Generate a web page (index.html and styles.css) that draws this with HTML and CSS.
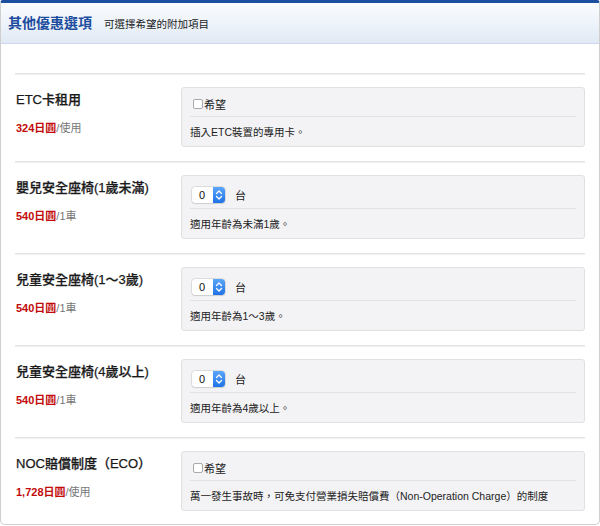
FILE: index.html
```html
<!DOCTYPE html>
<html lang="zh-Hant">
<head>
<meta charset="utf-8">
<title>其他優惠選項</title>
<link rel="stylesheet" href="styles.css">
</head>
<body>
<div class="panel">
  <div class="panel-head">
    <h2 class="panel-title">其他優惠選項</h2>
    <span class="panel-sub">可選擇希望的附加項目</span>
  </div>
  <div class="panel-body">
    <div class="opt-row">
      <div class="opt-label">
        <div class="opt-name">ETC卡租用</div>
        <div class="opt-price"><span class="price">324日圓</span>/使用</div>
      </div>
      <div class="opt-box">
        <div class="opt-control"><span class="check"></span><span class="check-text">希望</span></div>
        <div class="opt-desc">插入ETC裝置的專用卡。</div>
      </div>
    </div>
    <div class="opt-row">
      <div class="opt-label">
        <div class="opt-name">嬰兒安全座椅(1歲未滿)</div>
        <div class="opt-price"><span class="price">540日圓</span>/1車</div>
      </div>
      <div class="opt-box">
        <div class="opt-control tall">
          <span class="stepper"><span class="stepper-val">0</span><span class="stepper-btn"><svg width="8" height="12" viewBox="0 0 8 12"><path d="M1.5 4.5 L4 2 L6.5 4.5 M1.5 7.5 L4 10 L6.5 7.5" fill="none" stroke="#fff" stroke-width="1.4" stroke-linecap="round" stroke-linejoin="round"/></svg></span></span>
          <span class="unit">台</span>
        </div>
        <div class="opt-desc">適用年齡為未滿1歲。</div>
      </div>
    </div>
    <div class="opt-row">
      <div class="opt-label">
        <div class="opt-name">兒童安全座椅(1～3歲)</div>
        <div class="opt-price"><span class="price">540日圓</span>/1車</div>
      </div>
      <div class="opt-box">
        <div class="opt-control tall">
          <span class="stepper"><span class="stepper-val">0</span><span class="stepper-btn"><svg width="8" height="12" viewBox="0 0 8 12"><path d="M1.5 4.5 L4 2 L6.5 4.5 M1.5 7.5 L4 10 L6.5 7.5" fill="none" stroke="#fff" stroke-width="1.4" stroke-linecap="round" stroke-linejoin="round"/></svg></span></span>
          <span class="unit">台</span>
        </div>
        <div class="opt-desc">適用年齡為1～3歲。</div>
      </div>
    </div>
    <div class="opt-row">
      <div class="opt-label">
        <div class="opt-name">兒童安全座椅(4歲以上)</div>
        <div class="opt-price"><span class="price">540日圓</span>/1車</div>
      </div>
      <div class="opt-box">
        <div class="opt-control tall">
          <span class="stepper"><span class="stepper-val">0</span><span class="stepper-btn"><svg width="8" height="12" viewBox="0 0 8 12"><path d="M1.5 4.5 L4 2 L6.5 4.5 M1.5 7.5 L4 10 L6.5 7.5" fill="none" stroke="#fff" stroke-width="1.4" stroke-linecap="round" stroke-linejoin="round"/></svg></span></span>
          <span class="unit">台</span>
        </div>
        <div class="opt-desc">適用年齡為4歲以上。</div>
      </div>
    </div>
    <div class="opt-row">
      <div class="opt-label">
        <div class="opt-name">NOC賠償制度（ECO）</div>
        <div class="opt-price"><span class="price">1,728日圓</span>/使用</div>
      </div>
      <div class="opt-box">
        <div class="opt-control"><span class="check"></span><span class="check-text">希望</span></div>
        <div class="opt-desc">萬一發生事故時，可免支付營業損失賠償費（Non-Operation Charge）的制度</div>
      </div>
    </div>
  </div>
</div>
</body>
</html>
```

FILE: styles.css
```css
* { box-sizing: border-box; }
html, body { margin: 0; padding: 0; background: #fff; }
body {
  font-family: "Liberation Sans", "Noto Sans CJK TC", sans-serif;
  color: #333;
  width: 600px;
  height: 526px;
  overflow: hidden;
}
.panel {
  width: 600px;
  height: 525px;
  border: 1px solid #cfcfcf;
  border-top: 3px solid #1d4fa0;
  border-radius: 3px 3px 5px 5px;
  background: #fff;
  display: flex;
  flex-direction: column;
}
.panel-head {
  height: 41px;
  display: flex;
  align-items: center;
  gap: 12px;
  padding: 0 7px;
  background: linear-gradient(#fafcfe, #e1eaf5);
  border-bottom: 1px solid #c9d8ea;
}
.panel-title {
  margin: 0;
  font-size: 14px;
  font-weight: bold;
  color: #1c4c9e;
  line-height: 1;
}
.panel-sub {
  font-size: 10.5px;
  color: #222;
  padding-top: 1px;
}
.panel-body {
  padding: 29px 14px 0 14px;
}
.opt-row {
  display: flex;
  border-top: 1px solid #e4e4e4;
  box-shadow: inset 0 1px 0 #f0f0f0;
  padding: 13px 0 14px;
}
.opt-row:last-child { padding-bottom: 0; }
.opt-label {
  width: 166px;
  flex: none;
  padding-left: 1px;
}
.opt-name {
  font-size: 13px;
  font-weight: 500;
  color: #1a1a1a;
  line-height: 16px;
  margin-top: 5px;
  -webkit-text-stroke: 0.25px #1a1a1a;
}
.opt-price {
  font-size: 11px;
  color: #777;
  line-height: 14px;
  margin-top: 13px;
}
.price { color: #c20a0a; font-weight: bold; }
.opt-box {
  flex: 1;
  background: #f3f3f5;
  border: 1px solid #e1e1e4;
  border-radius: 3px;
  padding: 0 8px;
}
.opt-control {
  display: flex;
  align-items: center;
  height: 29px;
  padding-top: 3px;
  border-bottom: 1px solid #e2e2e4;
  font-size: 11px;
  color: #222;
}
.opt-control.tall { height: 33px; padding-top: 5px; }
.check {
  width: 10px;
  height: 10px;
  border: 1px solid #a9a9a9;
  border-radius: 2px;
  background: #fff;
  margin: 0 1px 0 3px;
}
.stepper {
  display: inline-flex;
  height: 16px;
  width: 33px;
  margin-left: 2px;
  border-radius: 3px;
  box-shadow: 0 0 0 0.5px #c6c6c6, 0 1px 1px rgba(0,0,0,0.12);
  background: #fff;
  overflow: hidden;
}
.stepper-val {
  flex: 1;
  font-size: 11px;
  line-height: 16px;
  padding-left: 7px;
  color: #111;
}
.stepper-btn {
  width: 12px;
  display: flex;
  align-items: center;
  justify-content: center;
  background: linear-gradient(#5aa6fb, #1f72e6);
  border-radius: 0 3px 3px 0;
}
.unit { margin-left: 10px; font-size: 11px; }
.opt-desc {
  font-size: 10.5px;
  color: #222;
  line-height: 16px;
  padding: 7px 0 6px;
}
```
